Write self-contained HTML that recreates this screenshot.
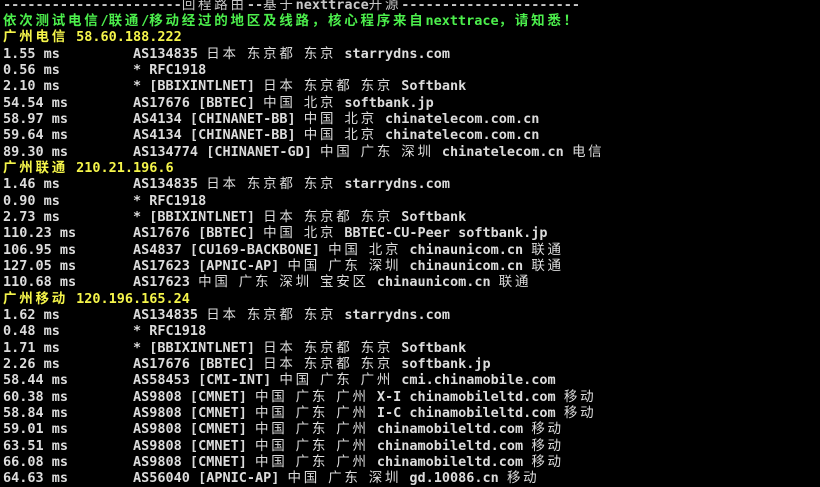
<!DOCTYPE html>
<html><head><meta charset="utf-8"><style>
html,body{margin:0;padding:0;background:#000;width:820px;height:487px;overflow:hidden}
#t{position:absolute;left:3px;top:-3.5px;font-family:"DejaVu Sans Mono","Liberation Mono","Noto Sans CJK SC",monospace;font-size:13.5px;line-height:16.35px;font-weight:bold;color:#dcdcdc}
#t div{height:16.35px;white-space:pre;overflow:visible}
.c{font-family:"Noto Sans CJK SC","WenQuanYi Zen Hei",sans-serif;letter-spacing:2.75px;font-weight:normal;line-height:0}
.g .c,.y .c{font-weight:bold}
.g{color:#4cef4c}.y{color:#f5f54a}.h{color:#c8c8c8}
</style></head><body><div id="t"><div class="h">----------------------<span class="c">回程路由</span>--<span class="c">基于</span>nexttrace<span class="c">开源</span>----------------------</div><div class="g"><span class="c">依次测试电信</span>/<span class="c">联通</span>/<span class="c">移动经过的地区及线路，核心程序来自</span>nexttrace<span class="c">，请知悉！</span></div><div class="y"><span class="c">广州电信</span> 58.60.188.222</div><div>1.55 ms         AS134835 <span class="c">日本</span> <span class="c">东京都</span> <span class="c">东京</span> starrydns.com</div><div>0.56 ms         * RFC1918</div><div>2.10 ms         * [BBIXINTLNET] <span class="c">日本</span> <span class="c">东京都</span> <span class="c">东京</span> Softbank</div><div>54.54 ms        AS17676 [BBTEC] <span class="c">中国</span> <span class="c">北京</span> softbank.jp</div><div>58.97 ms        AS4134 [CHINANET-BB] <span class="c">中国</span> <span class="c">北京</span> chinatelecom.com.cn</div><div>59.64 ms        AS4134 [CHINANET-BB] <span class="c">中国</span> <span class="c">北京</span> chinatelecom.com.cn</div><div>89.30 ms        AS134774 [CHINANET-GD] <span class="c">中国</span> <span class="c">广东</span> <span class="c">深圳</span> chinatelecom.cn <span class="c">电信</span></div><div class="y"><span class="c">广州联通</span> 210.21.196.6</div><div>1.46 ms         AS134835 <span class="c">日本</span> <span class="c">东京都</span> <span class="c">东京</span> starrydns.com</div><div>0.90 ms         * RFC1918</div><div>2.73 ms         * [BBIXINTLNET] <span class="c">日本</span> <span class="c">东京都</span> <span class="c">东京</span> Softbank</div><div>110.23 ms       AS17676 [BBTEC] <span class="c">中国</span> <span class="c">北京</span> BBTEC-CU-Peer softbank.jp</div><div>106.95 ms       AS4837 [CU169-BACKBONE] <span class="c">中国</span> <span class="c">北京</span> chinaunicom.cn <span class="c">联通</span></div><div>127.05 ms       AS17623 [APNIC-AP] <span class="c">中国</span> <span class="c">广东</span> <span class="c">深圳</span> chinaunicom.cn <span class="c">联通</span></div><div>110.68 ms       AS17623 <span class="c">中国</span> <span class="c">广东</span> <span class="c">深圳</span> <span class="c">宝安区</span> chinaunicom.cn <span class="c">联通</span></div><div class="y"><span class="c">广州移动</span> 120.196.165.24</div><div>1.62 ms         AS134835 <span class="c">日本</span> <span class="c">东京都</span> <span class="c">东京</span> starrydns.com</div><div>0.48 ms         * RFC1918</div><div>1.71 ms         * [BBIXINTLNET] <span class="c">日本</span> <span class="c">东京都</span> <span class="c">东京</span> Softbank</div><div>2.26 ms         AS17676 [BBTEC] <span class="c">日本</span> <span class="c">东京都</span> <span class="c">东京</span> softbank.jp</div><div>58.44 ms        AS58453 [CMI-INT] <span class="c">中国</span> <span class="c">广东</span> <span class="c">广州</span> cmi.chinamobile.com</div><div>60.38 ms        AS9808 [CMNET] <span class="c">中国</span> <span class="c">广东</span> <span class="c">广州</span> X-I chinamobileltd.com <span class="c">移动</span></div><div>58.84 ms        AS9808 [CMNET] <span class="c">中国</span> <span class="c">广东</span> <span class="c">广州</span> I-C chinamobileltd.com <span class="c">移动</span></div><div>59.01 ms        AS9808 [CMNET] <span class="c">中国</span> <span class="c">广东</span> <span class="c">广州</span> chinamobileltd.com <span class="c">移动</span></div><div>63.51 ms        AS9808 [CMNET] <span class="c">中国</span> <span class="c">广东</span> <span class="c">广州</span> chinamobileltd.com <span class="c">移动</span></div><div>66.08 ms        AS9808 [CMNET] <span class="c">中国</span> <span class="c">广东</span> <span class="c">广州</span> chinamobileltd.com <span class="c">移动</span></div><div>64.63 ms        AS56040 [APNIC-AP] <span class="c">中国</span> <span class="c">广东</span> <span class="c">深圳</span> gd.10086.cn <span class="c">移动</span></div></div></body></html>
